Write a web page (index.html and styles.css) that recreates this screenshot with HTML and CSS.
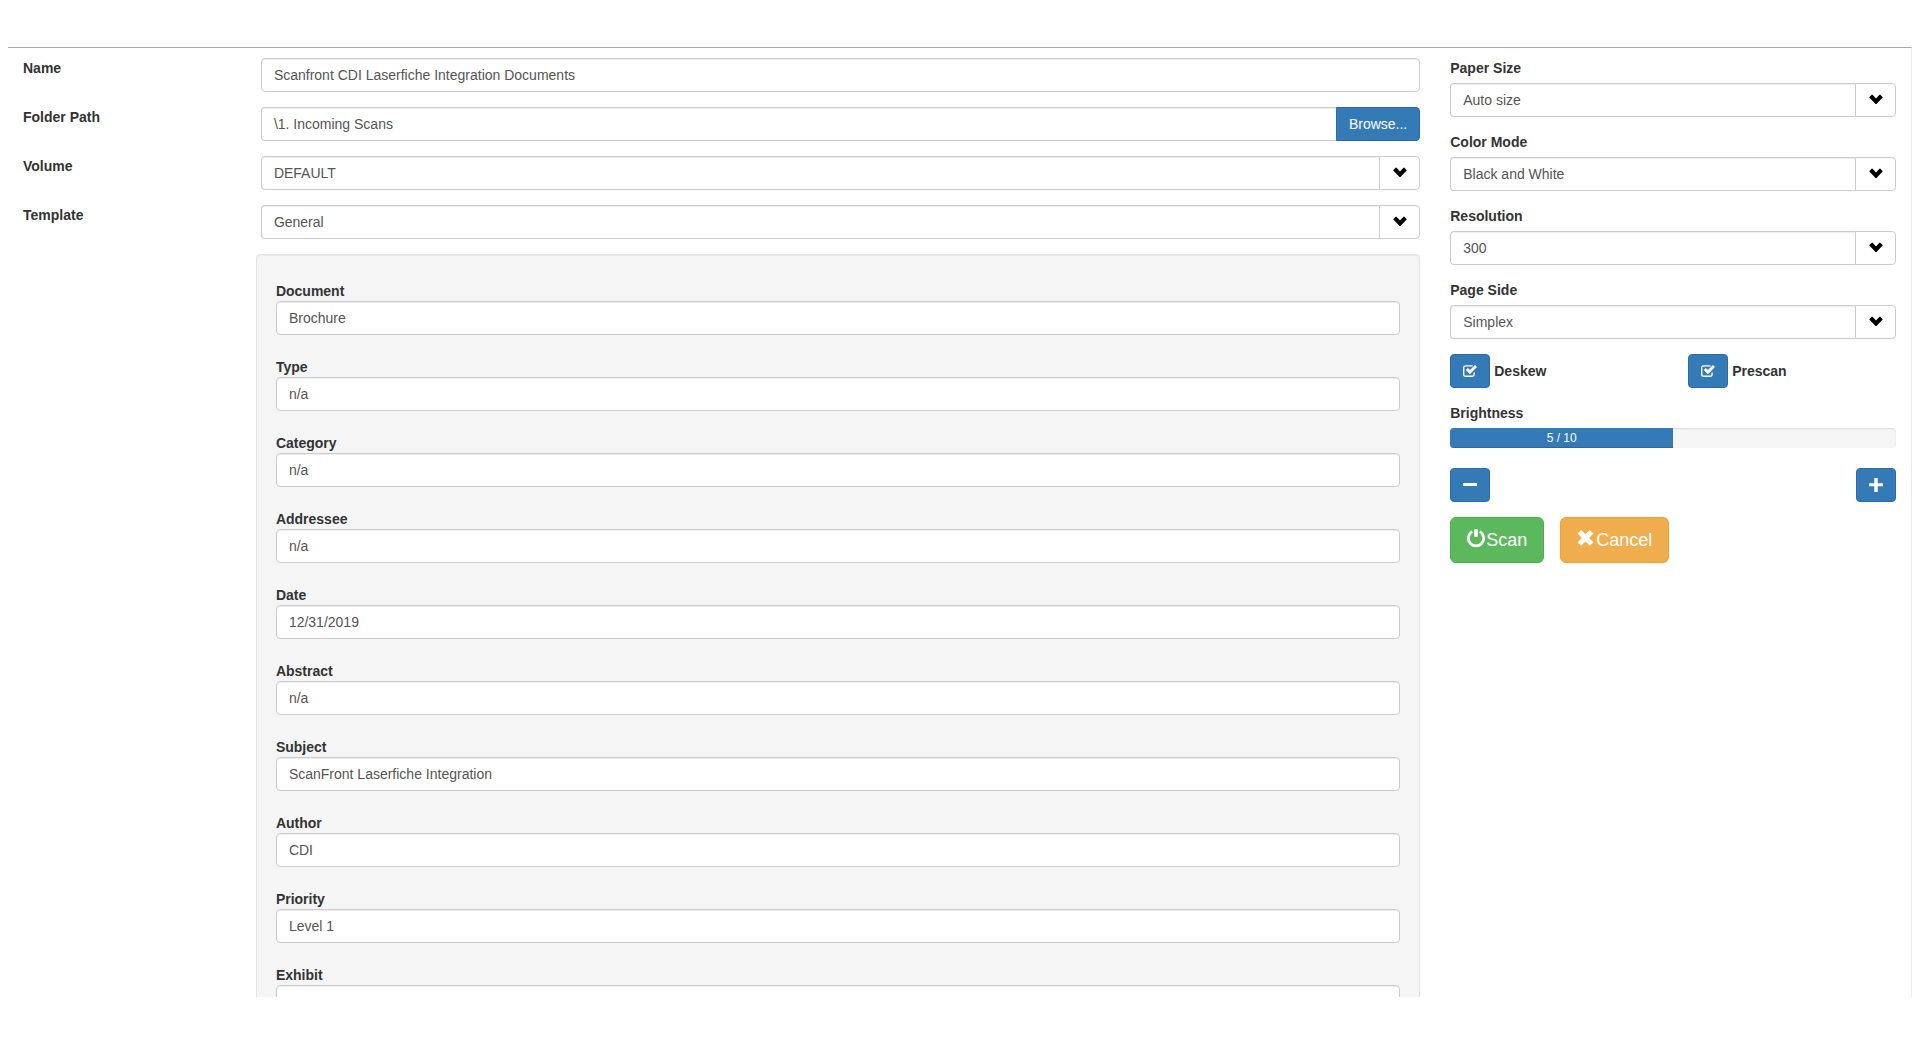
FILE: index.html
```html
<!DOCTYPE html>
<html lang="en">
<head>
    <meta charset="UTF-8">
    <meta name="viewport" content="width=device-width, initial-scale=1.0">
    <title>Scan Settings</title>
    <link rel="stylesheet" href="styles.css">
</head>
<body>
    <!-- shared glyphs -->
    <svg class="glyph-defs" aria-hidden="true">
        <symbol id="chevron-down" viewBox="0 0 14 14">
            <path d="M3 1.6 Q3.4 1.6 3.8 2 L7 5.4 L10.2 2 Q10.6 1.6 11 1.6 L13.6 4 Q13.8 4.4 13.4 4.8 L7.5 10.9 Q7 11.3 6.5 10.9 L0.6 4.8 Q0.2 4.4 0.4 4 Z"/>
        </symbol>
        <symbol id="check" viewBox="0 0 14 14">
            <path d="M9.6 1.9 H2.4 A1.7 1.7 0 0 0 0.7 3.6 V10.6 A1.7 1.7 0 0 0 2.4 12.3 H9.4 A1.7 1.7 0 0 0 11.1 10.6 V8.6" fill="none" stroke="currentColor" stroke-width="1.4"/>
            <path d="M12 1 L14 3 L6.9 10.2 L2.8 6.1 L4.9 4 L6.9 6 Z"/>
        </symbol>
    </svg>

    <form class="scan-panel">
        <div class="main-col">
            <div class="form-row">
                <label for="name">Name</label>
                <input type="text" id="name" class="form-control" value="Scanfront CDI Laserfiche Integration Documents">
            </div>
            <div class="form-row">
                <label for="folder">Folder Path</label>
                <div class="input-group">
                    <input type="text" id="folder" class="form-control" value="\1. Incoming Scans">
                    <button type="button" class="btn btn-primary">Browse...</button>
                </div>
            </div>
            <div class="form-row">
                <label for="volume">Volume</label>
                <div class="input-group">
                    <select id="volume" class="form-control"><option>DEFAULT</option></select>
                    <span class="addon"><svg class="glyph"><use href="#chevron-down"/></svg></span>
                </div>
            </div>
            <div class="form-row">
                <label for="template">Template</label>
                <div class="input-group">
                    <select id="template" class="form-control"><option>General</option></select>
                    <span class="addon"><svg class="glyph"><use href="#chevron-down"/></svg></span>
                </div>
            </div>

            <!-- template fields -->
            <div class="form-row">
                <div class="well">
                    <div class="field">
                        <label for="document">Document</label>
                        <input type="text" id="document" class="form-control" value="Brochure">
                    </div>
                    <div class="field">
                        <label for="type">Type</label>
                        <input type="text" id="type" class="form-control" value="n/a">
                    </div>
                    <div class="field">
                        <label for="category">Category</label>
                        <input type="text" id="category" class="form-control" value="n/a">
                    </div>
                    <div class="field">
                        <label for="addressee">Addressee</label>
                        <input type="text" id="addressee" class="form-control" value="n/a">
                    </div>
                    <div class="field">
                        <label for="date">Date</label>
                        <input type="text" id="date" class="form-control" value="12/31/2019">
                    </div>
                    <div class="field">
                        <label for="abstract">Abstract</label>
                        <input type="text" id="abstract" class="form-control" value="n/a">
                    </div>
                    <div class="field">
                        <label for="subject">Subject</label>
                        <input type="text" id="subject" class="form-control" value="ScanFront Laserfiche Integration">
                    </div>
                    <div class="field">
                        <label for="author">Author</label>
                        <input type="text" id="author" class="form-control" value="CDI">
                    </div>
                    <div class="field">
                        <label for="priority">Priority</label>
                        <input type="text" id="priority" class="form-control" value="Level 1">
                    </div>
                    <div class="field">
                        <label for="exhibit">Exhibit</label>
                        <input type="text" id="exhibit" class="form-control">
                    </div>
                </div>
            </div>
        </div>

        <div class="side-col">
            <div class="option">
                <label for="paper-size">Paper Size</label>
                <div class="input-group">
                    <select id="paper-size" class="form-control"><option>Auto size</option></select>
                    <span class="addon"><svg class="glyph"><use href="#chevron-down"/></svg></span>
                </div>
            </div>
            <div class="option">
                <label for="color-mode">Color Mode</label>
                <div class="input-group">
                    <select id="color-mode" class="form-control"><option>Black and White</option></select>
                    <span class="addon"><svg class="glyph"><use href="#chevron-down"/></svg></span>
                </div>
            </div>
            <div class="option">
                <label for="resolution">Resolution</label>
                <div class="input-group">
                    <select id="resolution" class="form-control"><option>300</option></select>
                    <span class="addon"><svg class="glyph"><use href="#chevron-down"/></svg></span>
                </div>
            </div>
            <div class="option">
                <label for="page-side">Page Side</label>
                <div class="input-group">
                    <select id="page-side" class="form-control"><option>Simplex</option></select>
                    <span class="addon"><svg class="glyph"><use href="#chevron-down"/></svg></span>
                </div>
            </div>

            <div class="checks">
                <label class="check">
                    <span class="check-box">
                        <input type="checkbox" checked>
                        <svg class="glyph"><use href="#check"/></svg>
                    </span>
                    Deskew
                </label>
                <label class="check">
                    <span class="check-box">
                        <input type="checkbox" checked>
                        <svg class="glyph"><use href="#check"/></svg>
                    </span>
                    Prescan
                </label>
            </div>

            <div class="brightness">
                <div class="title" id="brightness-title">Brightness</div>
                <div class="progress" role="progressbar" aria-labelledby="brightness-title" aria-valuenow="5" aria-valuemin="0" aria-valuemax="10">
                    <div class="progress-bar" style="width: 50%">5 / 10</div>
                </div>
                <div class="steps">
                    <button type="button" class="btn btn-primary" aria-label="Decrease brightness">
                        <svg class="glyph" viewBox="0 0 14 14"><path d="M0 5 H14 V8 H0 Z"/></svg>
                    </button>
                    <button type="button" class="btn btn-primary" aria-label="Increase brightness">
                        <svg class="glyph" viewBox="0 0 14 14"><path d="M5.3 0 H8.7 V5.3 H14 V8.3 H8.7 V14 H5.3 V8.3 H0 V5.3 H5.3 Z"/></svg>
                    </button>
                </div>
            </div>

            <div class="actions">
                <button type="submit" class="btn btn-lg btn-success">
                    <svg class="glyph" viewBox="0 0 18 18">
                        <path d="M5.2 2.6 A7.6 7.6 0 1 0 12.8 2.6" fill="none" stroke="currentColor" stroke-width="2.7"/>
                        <path d="M7.2 0.9 Q7.2 0 8.1 0 H9.9 Q10.8 0 10.8 0.9 V7.1 Q10.8 8 9.9 8 H8.1 Q7.2 8 7.2 7.1 Z"/>
                    </svg>Scan
                </button>
                <button type="button" class="btn btn-lg btn-warning">
                    <svg class="glyph" viewBox="0 0 18 18">
                        <path d="M4.2 1 L8.5 5.3 L12.8 1 L16.4 4.6 L12.1 8.9 L16.4 13.2 L12.8 16.8 L8.5 12.5 L4.2 16.8 L0.6 13.2 L4.9 8.9 L0.6 4.6 Z"/>
                    </svg>Cancel
                </button>
            </div>
        </div>
    </form>
</body>
</html>
```

FILE: styles.css
```css
* {
    box-sizing: border-box;
}

body {
    margin: 0;
    padding: 47px 8px 43px;
    height: 100vh;
    background: #fff;
    color: #333;
    font-family: "Liberation Sans", Arial, sans-serif;
    font-size: 14px;
    line-height: 20px;
}

input,
select,
button {
    margin: 0;
    font: inherit;
}

label,
.title {
    display: block;
    font-weight: bold;
}

.glyph-defs {
    display: none;
}

.glyph {
    width: 14px;
    height: 14px;
    fill: currentColor;
}

/* Layout */
.scan-panel {
    display: grid;
    grid-template-columns: minmax(0, 3fr) minmax(0, 1fr);
    height: 100%;
    overflow: hidden;
    border-top: 1px solid #aaa;
    border-right: 1px solid #eee;
}

.main-col {
    padding-top: 10px;
}

.side-col {
    padding: 10px 15px 0;
}

.form-row {
    display: grid;
    grid-template-columns: minmax(0, 1fr) minmax(0, 5fr);
    margin-bottom: 15px;
}

.form-row > * {
    margin: 0 15px;
}

/* Inputs */
.form-control {
    display: block;
    width: 100%;
    height: 34px;
    padding: 6px 12px;
    border: 1px solid #ccc;
    border-radius: 4px;
    background: #fff;
    color: #555;
    box-shadow: inset 0 1px 1px rgba(0, 0, 0, 0.075);
    appearance: none;
}

.form-row > .form-control {
    width: auto;
}

.input-group {
    display: flex;
}

.input-group .form-control {
    flex: 1;
    min-width: 0;
    border-top-right-radius: 0;
    border-bottom-right-radius: 0;
    border-right: 0;
}

.input-group .btn {
    border-top-left-radius: 0;
    border-bottom-left-radius: 0;
}

.addon {
    display: flex;
    align-items: center;
    justify-content: center;
    width: 41px;
    border: 1px solid #ccc;
    border-radius: 0 4px 4px 0;
    color: #000;
}

/* Template fields */
.form-row > .well {
    grid-column: 2;
    margin-left: 10px;
    padding: 19px;
    border: 1px solid #e3e3e3;
    border-radius: 4px;
    background: #f5f5f5;
    box-shadow: inset 0 1px 1px rgba(0, 0, 0, 0.05);
}

.field {
    padding-top: 7px;
    margin-bottom: 15px;
}

/* Scanner options */
.option {
    margin-bottom: 15px;
}

.option label,
.brightness .title {
    margin-bottom: 5px;
}

.checks {
    display: grid;
    grid-template-columns: 1fr 1fr;
    column-gap: 30px;
    margin-bottom: 15px;
}

.check {
    display: flex;
    align-items: center;
    gap: 4px;
}

.check-box {
    display: grid;
    place-items: center;
    color: #fff;
}

.check-box > * {
    grid-area: 1 / 1;
}

.check-box input {
    width: 40px;
    height: 34px;
    border: 1px solid #2e6da4;
    border-radius: 4px;
    background: #337ab7;
    appearance: none;
}

.check-box .glyph {
    z-index: 1;
    pointer-events: none;
}

.check-box input:not(:checked) + .glyph {
    visibility: hidden;
}

.progress {
    height: 20px;
    margin-bottom: 20px;
    overflow: hidden;
    border-radius: 4px;
    background: #f5f5f5;
    box-shadow: inset 0 1px 2px rgba(0, 0, 0, 0.1);
}

.progress-bar {
    height: 100%;
    background: #337ab7;
    box-shadow: inset 0 -1px 0 rgba(0, 0, 0, 0.15);
    color: #fff;
    font-size: 12px;
    text-align: center;
}

.steps {
    display: flex;
    justify-content: space-between;
    margin-bottom: 15px;
}

/* Buttons */
.btn {
    display: flex;
    align-items: center;
    height: 34px;
    padding: 6px 12px;
    border: 1px solid transparent;
    border-radius: 4px;
    color: #fff;
    cursor: pointer;
}

.btn-primary {
    border-color: #2e6da4;
    background: #337ab7;
}

.btn-success {
    border-color: #4cae4c;
    background: #5cb85c;
}

.btn-warning {
    border-color: #eea236;
    background: #f0ad4e;
}

.btn-lg {
    gap: 1px;
    height: 46px;
    padding: 10px 16px;
    border-radius: 6px;
    font-size: 18px;
}

.btn-lg .glyph {
    width: 18px;
    height: 18px;
    margin-bottom: 4px;
    overflow: visible;
}

.actions {
    display: flex;
    gap: 16px;
}
```
